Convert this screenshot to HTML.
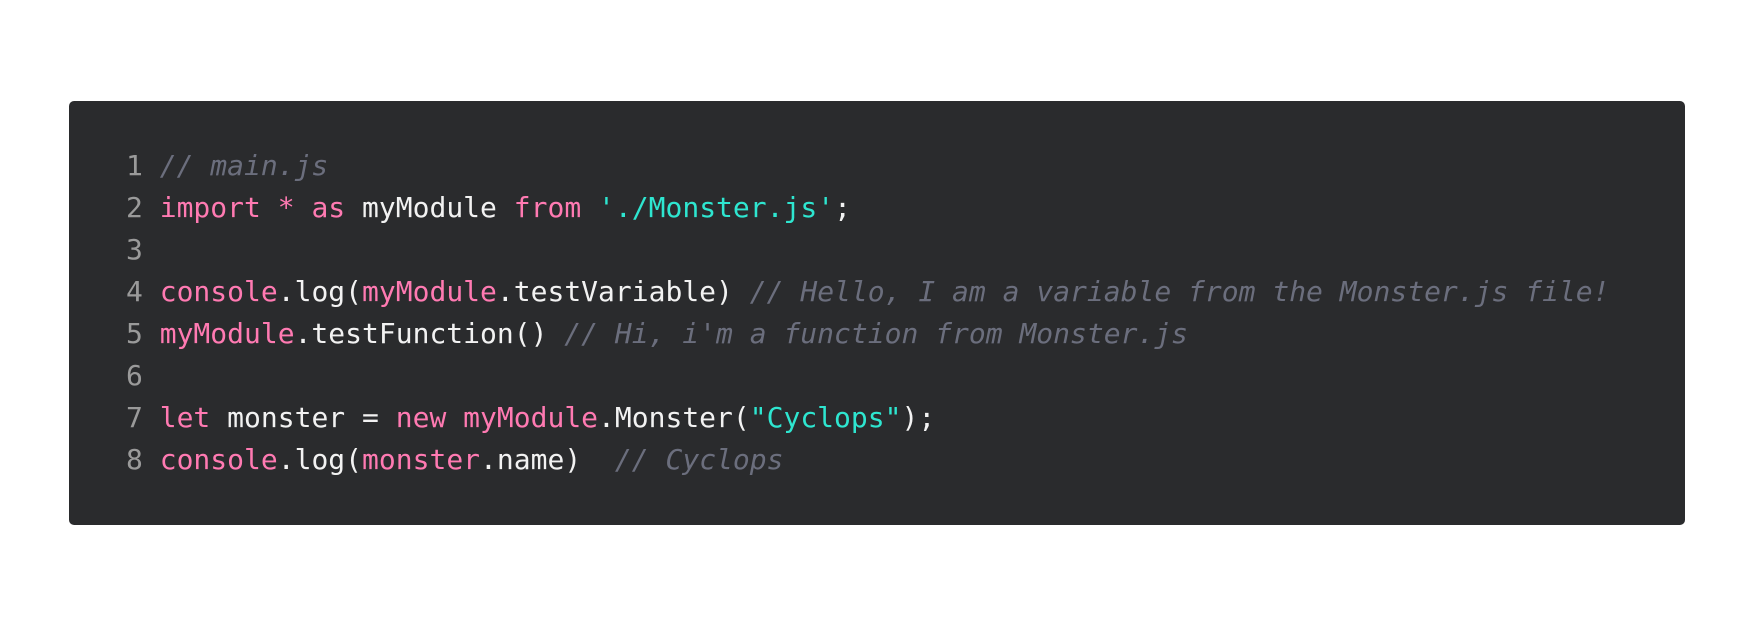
<!DOCTYPE html>
<html><head><meta charset="utf-8"><style>
html,body{margin:0;padding:0;background:#fff;width:1754px;height:626px;overflow:hidden}
.box{position:absolute;left:69px;top:101px;width:1616px;height:424px;background:#2a2b2d;border-radius:5px;box-sizing:border-box;padding:44px 0 0 57px}
pre{margin:0;font-family:"DejaVu Sans Mono","Liberation Mono",monospace;font-size:28px;line-height:42px;color:#f2f2f2}
.n{color:#9a9a9a}.k{color:#ff7ab2}.s{color:#2ee6d0}.c{color:#6b6e7d;font-style:italic}
</style></head><body><div class="box"><pre><span class="n">1</span> <span class="c">// main.js</span>
<span class="n">2</span> <span class="k">import</span> <span class="k">*</span> <span class="k">as</span> myModule <span class="k">from</span> <span class="s">'./Monster.js'</span>;
<span class="n">3</span>
<span class="n">4</span> <span class="k">console</span>.log(<span class="k">myModule</span>.testVariable) <span class="c">// Hello, I am a variable from the Monster.js file!</span>
<span class="n">5</span> <span class="k">myModule</span>.testFunction() <span class="c">// Hi, i'm a function from Monster.js</span>
<span class="n">6</span>
<span class="n">7</span> <span class="k">let</span> monster = <span class="k">new</span> <span class="k">myModule</span>.Monster(<span class="s">"Cyclops"</span>);
<span class="n">8</span> <span class="k">console</span>.log(<span class="k">monster</span>.name)  <span class="c">// Cyclops</span></pre></div></body></html>
